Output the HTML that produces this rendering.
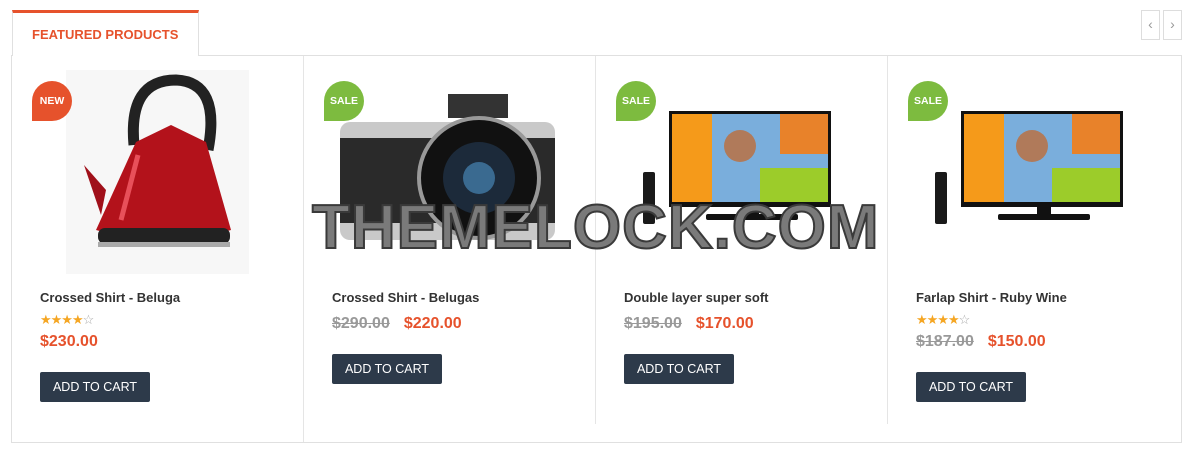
<!DOCTYPE html>
<html><head><style>
*{margin:0;padding:0;box-sizing:border-box}
body{width:1192px;height:451px;background:#fff;font-family:"Liberation Sans",sans-serif;position:relative;overflow:hidden}
.a{position:absolute}
.tab{left:12px;top:10px;width:187px;height:46px;border:1px solid #e0e0e0;border-top:3px solid #e6522c;border-bottom:none;background:#fff;color:#e6522c;font-weight:bold;font-size:13px;padding:14px 0 0 19px;z-index:2}
.box{left:11px;top:55px;width:1171px;height:388px;border:1px solid #e0e0e0}
.div{width:1px;background:#e5e5e5;top:56px}
.nav{top:10px;width:19px;height:30px;border:1px solid #ddd;color:#999;font-size:14px;text-align:center;line-height:27px}
.badge{width:40px;height:40px;border-radius:20px 20px 20px 0;color:#fff;font-size:10.5px;font-weight:bold;text-align:center;line-height:40px}
.new{background:#e6522c}.sale{background:#7dbb3f}
.name{font-size:13px;color:#333;font-weight:bold}
.stars{font-size:13px;color:#f5a623;letter-spacing:-1px}
.stars span{color:#aaa}
.price{font-size:16px;font-weight:bold;color:#e6522c}
.old{color:#999;text-decoration:line-through;margin-right:14px}
.btn{width:110px;height:30px;background:#2d3a4a;border-radius:2px;color:#fff;font-size:12.5px;text-align:center;line-height:30px}
.wm{left:312px;top:192px;font-size:62px;font-weight:bold;color:#7a7a7a;-webkit-text-stroke:2px #3a3a3a;letter-spacing:1px;z-index:5}
</style></head><body>
<div class="a box"></div>
<div class="a tab">FEATURED PRODUCTS</div>
<div class="a nav" style="left:1141px">&#8249;</div>
<div class="a nav" style="left:1163px">&#8250;</div>
<div class="a div" style="left:303px;height:386px"></div>
<div class="a div" style="left:595px;height:368px"></div>
<div class="a div" style="left:887px;height:368px"></div>

<!-- kettle -->
<div class="a" style="left:66px;top:70px;width:183px;height:204px;background:#f7f7f7"></div>
<svg class="a" style="left:66px;top:70px" width="183" height="204">
<path d="M68 75 Q62 10 110 10 Q155 12 142 80" stroke="#222" stroke-width="11" fill="none"/>
<path d="M70 72 L105 55 L140 72 L165 160 Q100 180 30 160 Z" fill="#b3121b"/>
<path d="M72 85 L55 150" stroke="#e8505a" stroke-width="5"/>
<path d="M40 120 L18 95 L35 145 Z" fill="#a0101a"/>
<rect x="32" y="158" width="132" height="16" rx="7" fill="#222"/>
<rect x="32" y="172" width="132" height="5" fill="#aaa"/>
</svg>
<div class="a badge new" style="left:32px;top:81px">NEW</div>

<!-- camera -->
<svg class="a" style="left:336px;top:90px" width="225" height="160">
<rect x="112" y="4" width="60" height="24" fill="#333"/>
<rect x="4" y="32" width="215" height="118" rx="10" fill="#c9c9c9"/>
<rect x="4" y="48" width="215" height="85" fill="#2a2a2a"/>
<circle cx="143" cy="88" r="60" fill="#111" stroke="#999" stroke-width="4"/>
<circle cx="143" cy="88" r="36" fill="#1c2a3a"/>
<circle cx="143" cy="88" r="16" fill="#3a6a90"/>
</svg>
<div class="a badge sale" style="left:324px;top:81px">SALE</div>

<!-- TVs -->
<svg class="a" style="left:640px;top:108px" width="195" height="120">
<rect x="29" y="3" width="162" height="96" fill="#111"/>
<rect x="32" y="6" width="156" height="88" fill="#7aaedc"/>
<rect x="32" y="6" width="40" height="88" fill="#f59a1a"/>
<rect x="120" y="60" width="68" height="34" fill="#9ccc2a"/>
<rect x="140" y="6" width="48" height="40" fill="#e8822a"/>
<circle cx="100" cy="38" r="16" fill="#b07a5a"/>
<rect x="105" y="99" width="14" height="8" fill="#111"/>
<rect x="66" y="106" width="92" height="6" rx="2" fill="#111"/>
<rect x="3" y="64" width="12" height="52" rx="2" fill="#1a1a1a"/>
</svg>
<div class="a badge sale" style="left:616px;top:81px">SALE</div>
<svg class="a" style="left:932px;top:108px" width="195" height="120">
<rect x="29" y="3" width="162" height="96" fill="#111"/>
<rect x="32" y="6" width="156" height="88" fill="#7aaedc"/>
<rect x="32" y="6" width="40" height="88" fill="#f59a1a"/>
<rect x="120" y="60" width="68" height="34" fill="#9ccc2a"/>
<rect x="140" y="6" width="48" height="40" fill="#e8822a"/>
<circle cx="100" cy="38" r="16" fill="#b07a5a"/>
<rect x="105" y="99" width="14" height="8" fill="#111"/>
<rect x="66" y="106" width="92" height="6" rx="2" fill="#111"/>
<rect x="3" y="64" width="12" height="52" rx="2" fill="#1a1a1a"/>
</svg>
<div class="a badge sale" style="left:908px;top:81px">SALE</div>

<div class="a wm">THEMELOCK.COM</div>

<!-- card 1 -->
<div class="a name" style="left:40px;top:290px">Crossed Shirt - Beluga</div>
<div class="a stars" style="left:40px;top:312px">★★★★<span>☆</span></div>
<div class="a price" style="left:40px;top:333px">$230.00</div>
<div class="a btn" style="left:40px;top:372px">ADD TO CART</div>
<!-- card 2 -->
<div class="a name" style="left:332px;top:290px">Crossed Shirt - Belugas</div>
<div class="a price" style="left:332px;top:315px"><span class="old">$290.00</span>$220.00</div>
<div class="a btn" style="left:332px;top:354px">ADD TO CART</div>
<!-- card 3 -->
<div class="a name" style="left:624px;top:290px">Double layer super soft</div>
<div class="a price" style="left:624px;top:315px"><span class="old">$195.00</span>$170.00</div>
<div class="a btn" style="left:624px;top:354px">ADD TO CART</div>
<!-- card 4 -->
<div class="a name" style="left:916px;top:290px">Farlap Shirt - Ruby Wine</div>
<div class="a stars" style="left:916px;top:312px">★★★★<span>☆</span></div>
<div class="a price" style="left:916px;top:333px"><span class="old">$187.00</span>$150.00</div>
<div class="a btn" style="left:916px;top:372px">ADD TO CART</div>
</body></html>
